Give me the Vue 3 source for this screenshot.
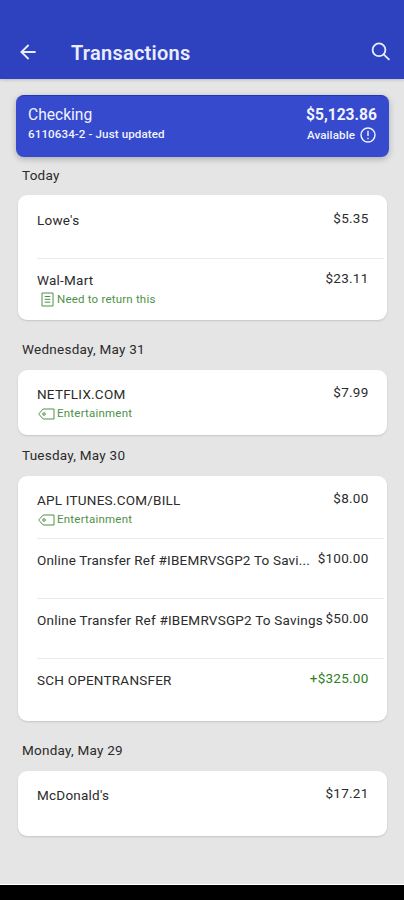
<script setup>
const groups = [
  { date: 'Today', first: true, rows: [
    { name: "Lowe's", amount: '$5.35' },
    { name: 'Wal-Mart', amount: '$23.11', note: 'Need to return this' },
  ] },
  { date: 'Wednesday, May 31', spaced: true, rows: [
    { name: 'NETFLIX.COM', amount: '$7.99', tag: 'Entertainment' },
  ] },
  { date: 'Tuesday, May 30', rows: [
    { name: 'APL ITUNES.COM/BILL', amount: '$8.00', tag: 'Entertainment' },
    { name: 'Online Transfer Ref #IBEMRVSGP2 To Savi...', amount: '$100.00', clipped: true },
    { name: 'Online Transfer Ref #IBEMRVSGP2 To Savings', amount: '$50.00' },
    { name: 'SCH OPENTRANSFER', amount: '+$325.00', credit: true },
  ] },
  { date: 'Monday, May 29', spaced: true, rows: [
    { name: "McDonald's", amount: '$17.21' },
  ] },
]
</script>

<template>
  <div class="screen">
    <header class="bar">
      <svg class="back" width="18" height="18" viewBox="0 0 18 18"><path d="M16.6 9H2.8M9.6 2L2.4 9L9.6 16" /></svg>
      <h1>Transactions</h1>
      <svg class="search" width="20" height="20" viewBox="0 0 20 20"><circle cx="8" cy="7.8" r="6.4" /><path d="M12.6 12.4L18.4 17.8" /></svg>
    </header>
    <main>
      <section class="account">
        <div>
          <div class="title">Checking</div>
          <div class="sub">6110634-2 - Just updated</div>
        </div>
        <div class="right">
          <div class="balance">$5,123.86</div>
          <div class="avail">
            <span>Available</span>
            <svg width="16" height="16" viewBox="0 0 16 16"><circle cx="8" cy="8" r="7" /><path d="M8 3.8V9M8 10.8V12.3" /></svg>
          </div>
        </div>
      </section>
      <template v-for="g in groups" :key="g.date">
        <h2 :class="{ first: g.first, spaced: g.spaced }">{{ g.date }}</h2>
        <ul class="card">
          <li v-for="(r, i) in g.rows" :key="i">
            <div class="info">
              <div class="name" :class="{ clipped: r.clipped }">{{ r.name }}</div>
              <div v-if="r.note" class="meta note">
                <svg width="13" height="15" viewBox="0 0 13 15"><path d="M1 1H12V14H1ZM3.7 4.5H9.3M3.7 7.3H9.3M3.7 10.2H9.3" /></svg>
                <span>{{ r.note }}</span>
              </div>
              <div v-if="r.tag" class="meta">
                <svg width="17" height="12" viewBox="0 0 17 12"><path d="M5.2 1H16V11H5.2L1.2 6.6V5.4Z" /><circle cx="6" cy="6" r="1.3" /></svg>
                <span>{{ r.tag }}</span>
              </div>
            </div>
            <div class="amount" :class="{ credit: r.credit }">{{ r.amount }}</div>
          </li>
        </ul>
      </template>
    </main>
    <footer class="nav"></footer>
  </div>
</template>

<style>
body { margin: 0; background: #e5e5e5; }
</style>
<style scoped>
.screen {
  display: flex;
  flex-direction: column;
  width: 404px;
  height: 900px;
  overflow: hidden;
  box-sizing: border-box;
  background: #e5e5e5;
  font-family: Roboto, "Liberation Sans", sans-serif;
  color: #2b2b2b;
}
svg { display: block; flex: none; fill: none; stroke: currentColor; }
.bar {
  display: flex;
  align-items: center;
  flex: none;
  height: 79px;
  box-sizing: border-box;
  padding: 25px 13px 0 19px;
  background: #2e42bf;
  box-shadow: 0 1px 3px rgba(0, 0, 0, .18);
  color: #e9edff;
}
.back { stroke-width: 1.8; }
.search { margin-left: auto; stroke-width: 1.8; }
h1 { margin: 1px 0 0 34px; font-size: 20px; line-height: 26px; font-weight: 600; letter-spacing: .25px; }
main { flex: 1; padding-top: 16px; }
.account {
  display: flex;
  justify-content: space-between;
  box-sizing: border-box;
  height: 62px;
  margin: 0 15px 0 16px;
  padding: 10px 12px 0;
  border-radius: 8px;
  border-top: 1px solid #1f38bb;
  background: #354acd;
  box-shadow: 0 2px 6px rgba(0, 0, 0, .25);
  color: #f1f3ff;
}
.title { font-size: 15.6px; line-height: 18px; }
.sub { margin-top: 2px; font-size: 11.6px; line-height: 16px; font-weight: 500; letter-spacing: .1px; }
.right { text-align: right; }
.balance { font-size: 15.6px; line-height: 18px; font-weight: 700; }
.avail { display: flex; align-items: center; justify-content: flex-end; gap: 5px; margin: 3px 1px 0 0; font-size: 11.6px; line-height: 16px; font-weight: 500; letter-spacing: .1px; }
.avail svg { stroke-width: 1.4; }
h2 { margin: 0; padding: 12.6px 22px 12.6px; font-size: 13.5px; line-height: 16px; font-weight: 400; letter-spacing: .25px; height: 16px; }
h2.first { padding: 10px 22px 12px; }
h2.spaced { padding-top: 20.8px; padding-bottom: 12.9px; }
.card {
  list-style: none;
  margin: 0 17.5px 0 18px;
  padding: 2.5px 0;
  border-radius: 9px;
  background: #fff;
  box-shadow: 0 1px 2px rgba(0, 0, 0, .14);
}
li { display: flex; justify-content: space-between; box-sizing: border-box; height: 60px; margin: 0 3px 0 19px; padding: 14px 15px 0 0; }
li + li { border-top: 1.5px solid #ebebeb; padding-top: 13px; }
.info { flex: none; }
.name { font-size: 13.5px; line-height: 17px; white-space: nowrap; letter-spacing: .23px; }
.name.clipped { letter-spacing: .19px; }
.amount { margin-top: -2px; font-size: 13.5px; line-height: 17px; letter-spacing: .25px; }
.credit { color: #2c8122; }
.meta { display: flex; align-items: center; gap: 2px; height: 15px; margin-top: 3px; padding-left: 1px; font-size: 11.5px; line-height: 15px; color: #4f9148; letter-spacing: .22px; }
.note { gap: 3px; padding-left: 4px; letter-spacing: .2px; }
.nav { flex: none; height: 16px; background: #000; border-top: 1px solid #fff; box-sizing: border-box; }
</style>
